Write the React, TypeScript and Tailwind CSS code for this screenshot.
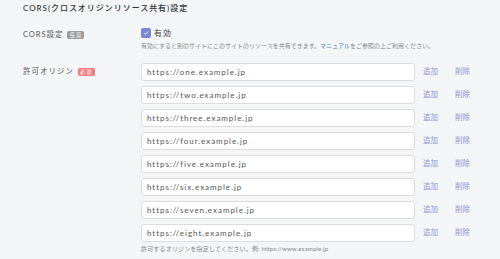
const origins = [
  'https://one.example.jp',
  'https://two.example.jp',
  'https://three.example.jp',
  'https://four.example.jp',
  'https://five.example.jp',
  'https://six.example.jp',
  'https://seven.example.jp',
  'https://eight.example.jp',
]

export default function App() {
  return (
    <main
      className="min-h-screen bg-[#f3f5f7] pl-[23px] pt-[2px] text-[#444] tracking-[0.06em]"
      style={{ fontFamily: 'Lato, "Noto Sans CJK JP", sans-serif' }}
    >
      <h2 className="text-[8px] font-medium leading-[12px] text-[#333]">
        CORS(クロスオリジンリソース共有)設定
      </h2>

      <div className="mt-[14px] flex">
        <div className="w-[118px] flex items-center gap-[4px] pt-[1px] h-[13px] text-[7.5px] text-[#555]">
          <span>CORS設定</span>
          <span className="rounded-[2px] bg-[#9a9a9a] px-[2px] text-[5.5px] leading-[8px] text-white">任意</span>
        </div>
        <div>
          <label className="flex items-center gap-[3px] h-[10px] text-[8px] text-[#444]">
            <span className="flex h-[10px] w-[10px] items-center justify-center rounded-[2px] bg-[#7b88d3]">
              <svg width="6" height="6" viewBox="0 0 10 10">
                <path d="M2 5.2 L4.2 7.3 L8.2 2.8" fill="none" stroke="white" strokeWidth="1.6" />
              </svg>
            </span>
            有効
          </label>
          <p className="mt-[4px] text-[6px] leading-[8px] tracking-normal text-[#888]">
            有効にすると別のサイトにこのサイトのリソースを共有できます。
            <span className="text-[#3b82c4]">マニュアル</span>
            をご参照の上ご利用ください。
          </p>
        </div>
      </div>

      <div className="mt-[13px] flex">
        <div className="w-[118px] flex items-start">
          <div className="flex h-[18px] items-center gap-[4px] text-[7.5px] text-[#555]">
            <span>許可オリジン</span>
            <span className="rounded-[2px] bg-[#f37a7a] px-[2px] text-[5.5px] leading-[8px] text-white">必須</span>
          </div>
        </div>
        <div>
          <div className="flex flex-col gap-[5px]">
            {origins.map((o) => (
              <div key={o} className="flex items-center">
                <div className="flex h-[18px] w-[274px] items-center rounded-[3px] border border-[#dcdcdc] bg-white pl-[5px] text-[8px] text-[#555]">
                  {o}
                </div>
                <span className="ml-[8px] text-[7.5px] tracking-normal text-[#8c96d0]">追加</span>
                <span className="ml-[17px] text-[7.5px] tracking-normal text-[#8c96d0]">削除</span>
              </div>
            ))}
          </div>
          <p className="mt-[3px] text-[6px] leading-[8px] tracking-[0.03em] text-[#888]">
            許可するオリジンを指定してください。例: https://www.example.jp
          </p>
        </div>
      </div>
    </main>
  )
}
